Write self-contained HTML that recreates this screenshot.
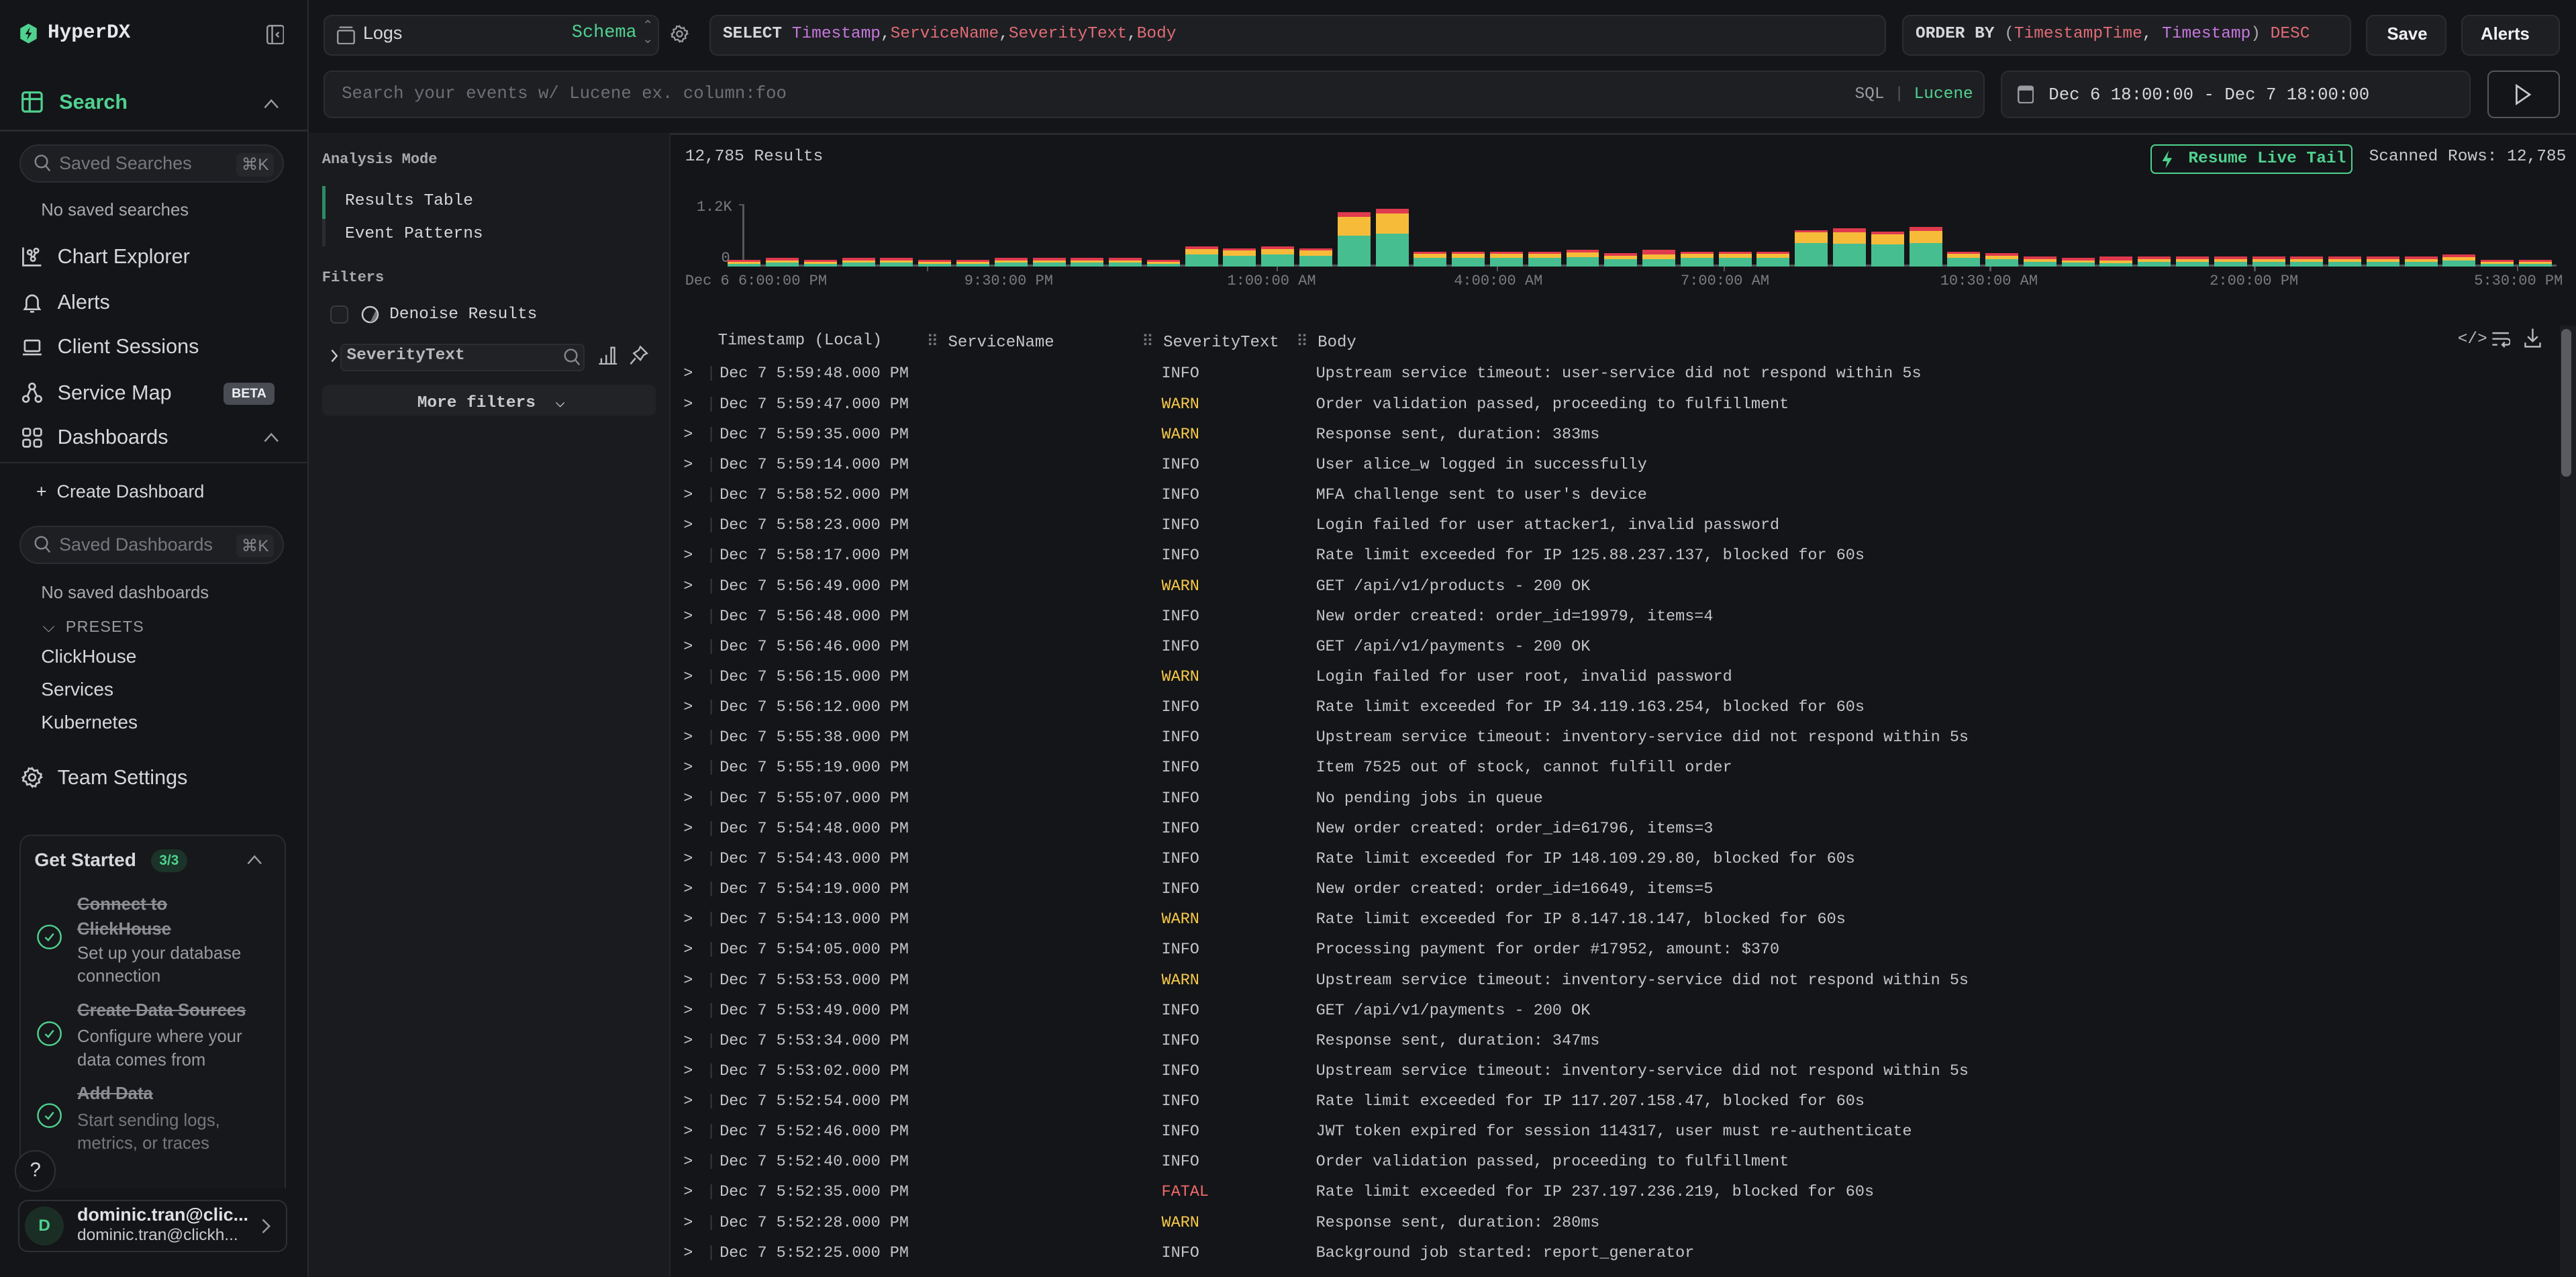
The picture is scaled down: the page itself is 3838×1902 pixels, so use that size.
<!DOCTYPE html>
<html><head><meta charset="utf-8"><style>
*{box-sizing:border-box;margin:0;padding:0}
html,body{width:3838px;height:1902px;overflow:hidden;background:#141518}
#r{width:1568px;height:777px;zoom:2.44770;position:relative;background:#141518;color:#c9cacd;font-family:"Liberation Sans",sans-serif;font-size:12.5px;overflow:hidden}
.a{position:absolute;white-space:nowrap}
.m{font-family:"Liberation Mono",monospace}
#sb{position:absolute;left:0;top:0;width:188px;height:777px;background:#141518;border-right:1px solid #2a2b2f}
.nav{position:absolute;left:13px;display:flex;align-items:center;gap:9px;color:#d6d7da}
.box{position:absolute;border:1px solid #2c2d32;background:#1e1f23;border-radius:5px}
.hl{position:absolute;left:0;width:187px;height:1px;background:#2a2b2f}
#fp{position:absolute;left:188px;top:81px;width:220px;height:696px;background:#1a1b1e;border-right:1px solid #25262a}
.row{position:absolute;left:408px;width:1150px;height:18px;font-family:"Liberation Mono",monospace;font-size:9.6px;color:#c4c5c8}
.row span{position:absolute;top:3px}
.bars{position:absolute;left:443px;top:100px;height:62px;width:1120px;display:flex;align-items:flex-end;gap:3.2px}
.b{width:20px;display:flex;flex-direction:column}
.b i{display:block;background:#e03a4e;height:1.5px}
.b u{display:block;background:#f7bb3a;height:28%}
.b s{display:block;background:#47be8f;flex:1}
</style></head><body><div id="r">

<div id="sb">
 <svg class="a" style="left:12px;top:14px" width="11" height="13" viewBox="0 0 11 13"><path d="M5.5 0.5 L10.5 3.3 V9.7 L5.5 12.5 L0.5 9.7 V3.3Z" fill="#4fd18f"/><path d="M6.5 2.5 L3.5 7 H5.5 L4.5 10.5 L7.5 6 H5.5Z" fill="#141518"/></svg>
 <div class="a m" style="left:29px;top:13px;font-size:12px;font-weight:bold;color:#e6e7ea">HyperDX</div>
 <svg class="a" style="left:162px;top:15px" width="11" height="12" viewBox="0 0 11 12"><rect x="0.5" y="0.5" width="10" height="11" rx="1.5" fill="none" stroke="#9a9ba0"/><line x1="3.5" y1="0.5" x2="3.5" y2="11.5" stroke="#9a9ba0"/><path d="M7.5 4.5 L6 6 L7.5 7.5" stroke="#9a9ba0" fill="none"/></svg>

 <div class="nav" style="top:55px;color:#4fd18f;font-weight:bold;font-size:12.5px"><svg width="13" height="13" viewBox="0 0 13 13"><rect x="0.7" y="0.7" width="11.6" height="11.6" rx="1.5" fill="none" stroke="#4fd18f" stroke-width="1.3"/><line x1="0.7" y1="4.7" x2="12.3" y2="4.7" stroke="#4fd18f" stroke-width="1.3"/><line x1="5" y1="0.7" x2="5" y2="12.3" stroke="#4fd18f" stroke-width="1.3"/></svg><span style="margin-left:1px">Search</span></div>
 <svg class="a" style="left:160px;top:60px" width="10" height="6"><path d="M1 5.5 L5 1 L9 5.5" fill="none" stroke="#9a9ba0"/></svg>
 <div class="hl" style="top:79px"></div>
 <div class="box" style="left:12px;top:88px;width:161px;height:23px;border-radius:12px"></div>
 <svg class="a" style="left:21px;top:94px" width="10" height="11"><circle cx="4.3" cy="4.3" r="3.6" fill="none" stroke="#85868b"/><line x1="7" y1="7" x2="9.5" y2="10" stroke="#85868b"/></svg>
 <div class="a" style="left:36px;top:93px;color:#77787d;font-size:11px">Saved Searches</div>
 <div class="a" style="left:144px;top:93px;color:#88898e;font-size:10px;background:#26272b;padding:1px 3px;border-radius:3px">⌘K</div>
 <div class="a" style="left:25px;top:122px;color:#a9aaae;font-size:10.5px">No saved searches</div>

 <div class="nav" style="top:149px"><svg width="13" height="13" viewBox="0 0 13 13" fill="none" stroke="#c9cacd" stroke-width="1.1"><path d="M1 1V12H12"/><circle cx="5" cy="4" r="1.3"/><circle cx="9" cy="3" r="1.3"/><circle cx="7" cy="8" r="1.3"/><path d="M5.5 5L6.6 7M8.6 4.2L7.4 6.8"/></svg>Chart Explorer</div>
 <div class="nav" style="top:177px"><svg width="13" height="13" viewBox="0 0 13 13" fill="none" stroke="#c9cacd" stroke-width="1.1"><path d="M3 9V5.5a3.5 3.5 0 0 1 7 0V9l1 1.5H2Z"/><path d="M5.3 12h2.4"/></svg>Alerts</div>
 <div class="nav" style="top:204px"><svg width="13" height="13" viewBox="0 0 13 13" fill="none" stroke="#c9cacd" stroke-width="1.1"><rect x="2" y="2.5" width="9" height="6.5" rx="0.8"/><path d="M0.8 11H12.2"/></svg>Client Sessions</div>
 <div class="nav" style="top:232px"><svg width="13" height="13" viewBox="0 0 13 13" fill="none" stroke="#c9cacd" stroke-width="1.1"><circle cx="6.5" cy="2.7" r="1.8"/><circle cx="2.7" cy="10.3" r="1.8"/><circle cx="10.3" cy="10.3" r="1.8"/><path d="M5.5 4.3L3.5 8.7M7.5 4.3L9.5 8.7"/></svg>Service Map</div>
 <div class="a" style="left:136px;top:233px;background:#4a4c54;color:#f0f0f2;font-size:8px;font-weight:bold;padding:2px 5px;border-radius:3px">BETA</div>
 <div class="nav" style="top:259px"><svg width="13" height="13" viewBox="0 0 13 13" fill="none" stroke="#c9cacd" stroke-width="1.1"><rect x="1" y="1" width="4.3" height="4.3" rx="1.2"/><rect x="7.7" y="1" width="4.3" height="4.3" rx="1.2"/><rect x="1" y="7.7" width="4.3" height="4.3" rx="1.2"/><rect x="7.7" y="7.7" width="4.3" height="4.3" rx="1.2"/></svg>Dashboards</div>
 <svg class="a" style="left:160px;top:263px" width="10" height="6"><path d="M1 5.5 L5 1 L9 5.5" fill="none" stroke="#9a9ba0"/></svg>
 <div class="hl" style="top:281px"></div>
 <div class="a" style="left:22px;top:293px;font-size:11px;color:#d6d7da">+&nbsp; Create Dashboard</div>
 <div class="box" style="left:12px;top:320px;width:161px;height:23px;border-radius:12px"></div>
 <svg class="a" style="left:21px;top:326px" width="10" height="11"><circle cx="4.3" cy="4.3" r="3.6" fill="none" stroke="#85868b"/><line x1="7" y1="7" x2="9.5" y2="10" stroke="#85868b"/></svg>
 <div class="a" style="left:36px;top:325px;color:#77787d;font-size:11px">Saved Dashboards</div>
 <div class="a" style="left:144px;top:325px;color:#88898e;font-size:10px;background:#26272b;padding:1px 3px;border-radius:3px">⌘K</div>
 <div class="a" style="left:25px;top:355px;color:#a9aaae;font-size:10.5px">No saved dashboards</div>
 <div class="a" style="left:26px;top:376px;color:#9a9ba0;font-size:9.5px;letter-spacing:0.5px">⌵&nbsp; PRESETS</div>
 <div class="a" style="left:25px;top:393px;font-size:11.5px;color:#d6d7da">ClickHouse</div>
 <div class="a" style="left:25px;top:413px;font-size:11.5px;color:#d6d7da">Services</div>
 <div class="a" style="left:25px;top:433px;font-size:11.5px;color:#d6d7da">Kubernetes</div>
 <div class="nav" style="top:466px"><svg width="13" height="13" viewBox="0 0 13 13" fill="none" stroke="#c9cacd" stroke-width="1.1"><circle cx="6.5" cy="6.5" r="2"/><path d="M6.5 1l1.2 1.5 1.9-.4.6 1.8 1.8.6-.4 1.9L12 6.5l-1.5 1.2.4 1.9-1.8.6-.6 1.8-1.9-.4L6.5 12l-1.2-1.5-1.9.4-.6-1.8-1.8-.6.4-1.9L1 6.5l1.5-1.2-.4-1.9 1.8-.6.6-1.8 1.9.4Z"/></svg>Team Settings</div>

 <div class="a" style="left:12px;top:508px;width:162px;height:215px;border:1px solid #2a2b2f;border-bottom:none;border-radius:7px 7px 0 0;background:#17181b"></div>
 <div class="a" style="left:21px;top:517px;font-weight:bold;font-size:11.5px;color:#d6d7da">Get Started</div>
 <div class="a" style="left:92px;top:517px;background:#1b3328;color:#4fd18f;font-size:8.5px;font-weight:bold;padding:2px 5px;border-radius:7px">3/3</div>
 <svg class="a" style="left:150px;top:520px" width="10" height="6"><path d="M1 5.5 L5 1 L9 5.5" fill="none" stroke="#9a9ba0"/></svg>
 <svg class="a" style="left:22px;top:562px" width="16" height="16"><circle cx="8" cy="8" r="7" fill="none" stroke="#4fd18f" stroke-width="1"/><path d="M5.5 8.2L7.3 10 10.5 6" fill="none" stroke="#4fd18f"/></svg>
 <div class="a" style="left:47px;top:543px;font-size:10.5px;line-height:15px;color:#8d8e93;font-weight:bold;text-decoration:line-through">Connect to<br>ClickHouse</div>
 <div class="a" style="left:47px;top:573px;font-size:10.5px;line-height:14px;color:#9a9ba0">Set up your database<br>connection</div>
 <svg class="a" style="left:22px;top:621px" width="16" height="16"><circle cx="8" cy="8" r="7" fill="none" stroke="#4fd18f" stroke-width="1"/><path d="M5.5 8.2L7.3 10 10.5 6" fill="none" stroke="#4fd18f"/></svg>
 <div class="a" style="left:47px;top:609px;font-size:10.5px;color:#8d8e93;font-weight:bold;text-decoration:line-through">Create Data Sources</div>
 <div class="a" style="left:47px;top:624px;font-size:10.5px;line-height:14px;color:#9a9ba0">Configure where your<br>data comes from</div>
 <svg class="a" style="left:22px;top:671px" width="16" height="16"><circle cx="8" cy="8" r="7" fill="none" stroke="#4fd18f" stroke-width="1"/><path d="M5.5 8.2L7.3 10 10.5 6" fill="none" stroke="#4fd18f"/></svg>
 <div class="a" style="left:47px;top:660px;font-size:10.5px;color:#8d8e93;font-weight:bold;text-decoration:line-through">Add Data</div>
 <div class="a" style="left:47px;top:675px;font-size:10.5px;line-height:14px;color:#76777c">Start sending logs,<br>metrics, or traces</div>
 <div class="a" style="left:9px;top:700px;width:25px;height:25px;border-radius:50%;border:1px solid #2f3035;background:#141518;color:#d6d7da;text-align:center;line-height:23px;font-size:12px">?</div>
 <div class="a" style="left:11px;top:730px;width:164px;height:32px;border:1px solid #2f3035;border-radius:6px;background:#141518"></div>
 <div class="a" style="left:15px;top:734px;width:24px;height:24px;border-radius:50%;background:#1b2e25;color:#4fd18f;font-weight:bold;font-size:10px;text-align:center;line-height:24px">D</div>
 <div class="a" style="left:47px;top:733px;font-size:11px;font-weight:bold;color:#e0e1e4">dominic.tran@clic...</div>
 <div class="a" style="left:47px;top:746px;font-size:10px;color:#c9cacd">dominic.tran@clickh...</div>
 <svg class="a" style="left:159px;top:741px" width="6" height="10"><path d="M1 1L5 5 1 9" fill="none" stroke="#9a9ba0"/></svg>
</div>

<!-- top bar -->
<div class="box" style="left:197px;top:9px;width:204px;height:25px"></div>
<svg class="a" style="left:205px;top:15px" width="11" height="12"><rect x="0.5" y="3.5" width="10" height="8" rx="1" fill="none" stroke="#9a9ba0"/><path d="M1.5 1.5H9.5" stroke="#9a9ba0"/></svg>
<div class="a" style="left:221px;top:14px;font-size:11px;color:#d6d7da">Logs</div>
<div class="a m" style="left:348px;top:14px;font-size:11px;color:#4fd18f">Schema</div>
<div class="a" style="left:391px;top:12px;font-size:8px;color:#77787d;line-height:8px">⌃<br>⌄</div>
<svg class="a" style="left:408px;top:15px" width="11" height="11" viewBox="0 0 13 13" fill="none" stroke="#9a9ba0" stroke-width="1.1"><circle cx="6.5" cy="6.5" r="2"/><path d="M6.5 1l1.2 1.5 1.9-.4.6 1.8 1.8.6-.4 1.9L12 6.5l-1.5 1.2.4 1.9-1.8.6-.6 1.8-1.9-.4L6.5 12l-1.2-1.5-1.9.4-.6-1.8-1.8-.6.4-1.9L1 6.5l1.5-1.2-.4-1.9 1.8-.6.6-1.8 1.9.4Z"/></svg>
<div class="box" style="left:432px;top:9px;width:716px;height:25px"></div>
<div class="a m" style="left:440px;top:15px;font-size:10px"><b style="color:#d6d7da">SELECT</b> <span style="color:#c678dd">Timestamp</span><span style="color:#ccc">,</span><span style="color:#e06c75">ServiceName</span>,<span style="color:#e06c75">SeverityText</span>,<span style="color:#e06c75">Body</span></div>
<div class="box" style="left:1158px;top:9px;width:273px;height:25px"></div>
<div class="a m" style="left:1166px;top:15px;font-size:10px"><b style="color:#d6d7da">ORDER BY</b> <span style="color:#aaa">(</span><span style="color:#e06c75">TimestampTime</span>, <span style="color:#c678dd">Timestamp</span><span style="color:#aaa">)</span> <span style="color:#e06c75">DESC</span></div>
<div class="box" style="left:1440px;top:9px;width:49px;height:25px"></div>
<div class="a" style="left:1453px;top:15px;font-size:10.5px;font-weight:bold;color:#f0f0f2">Save</div>
<div class="box" style="left:1498px;top:9px;width:60px;height:25px"></div>
<div class="a" style="left:1510px;top:15px;font-size:10.5px;font-weight:bold;color:#f0f0f2">Alerts</div>

<div class="box" style="left:197px;top:43px;width:1011px;height:29px"></div>
<div class="a m" style="left:208px;top:51px;font-size:10.5px;color:#6e6f74">Search your events w/ Lucene ex. column:foo</div>
<div class="a m" style="left:1129px;top:52px;font-size:10px;color:#9a9ba0">SQL <span style="color:#55565b">|</span> <span style="color:#4fd18f">Lucene</span></div>
<div class="box" style="left:1218px;top:43px;width:286px;height:29px"></div>
<svg class="a" style="left:1228px;top:51px" width="10" height="12"><rect x="0.5" y="1.5" width="9" height="10" rx="1.5" fill="none" stroke="#9a9ba0"/><rect x="0.5" y="1.5" width="9" height="2.5" fill="#9a9ba0"/></svg>
<div class="a m" style="left:1247px;top:52px;font-size:10.5px;color:#d6d7da">Dec 6 18:00:00 - Dec 7 18:00:00</div>
<div class="a" style="left:1514px;top:43px;width:44px;height:29px;border:1px solid #55565b;border-radius:4px"></div>
<svg class="a" style="left:1531px;top:51px" width="10" height="13"><path d="M1 1L9 6.5 1 12Z" fill="none" stroke="#c9cacd" stroke-width="1.1"/></svg>
<div class="a" style="left:188px;top:81px;width:1380px;height:1px;background:#2a2b2f"></div>

<!-- filter panel -->
<div id="fp"></div>
<div class="a m" style="left:196px;top:92px;font-size:9px;font-weight:bold;color:#a9aaae">Analysis Mode</div>
<div class="a" style="left:196px;top:113px;width:2px;height:20px;background:#2e8a63"></div>
<div class="a" style="left:196px;top:133px;width:2px;height:17px;background:#2c2d31"></div>
<div class="a m" style="left:210px;top:117px;font-size:10px;color:#d6d7da">Results Table</div>
<div class="a m" style="left:210px;top:137px;font-size:10px;color:#d6d7da">Event Patterns</div>
<div class="a m" style="left:196px;top:164px;font-size:9px;font-weight:bold;color:#a9aaae">Filters</div>
<div class="a" style="left:201px;top:186px;width:11px;height:11px;border:1px solid #3a3b40;border-radius:3px;background:#1e1f23"></div>
<svg class="a" style="left:220px;top:186px" width="11" height="11"><circle cx="5.5" cy="5.5" r="4.7" fill="none" stroke="#c9cacd"/><path d="M5.5 10.2A4.7 4.7 0 0 0 9 3" fill="#777"/></svg>
<div class="a m" style="left:237px;top:186px;font-size:10px;color:#d6d7da">Denoise Results</div>
<svg class="a" style="left:201px;top:212px" width="5" height="9"><path d="M1 1L4 4.5 1 8" fill="none" stroke="#c9cacd"/></svg>
<div class="a" style="left:207px;top:209px;width:149px;height:17px;border:1px solid #2c2d32;background:#212226;border-radius:3px"></div>
<div class="a m" style="left:211px;top:211px;font-size:10px;font-weight:bold;color:#b8b9bd">SeverityText</div>
<svg class="a" style="left:343px;top:212px" width="10" height="11"><circle cx="4.3" cy="4.3" r="3.6" fill="none" stroke="#85868b"/><line x1="7" y1="7" x2="9.5" y2="10" stroke="#85868b"/></svg>
<svg class="a" style="left:364px;top:210px" width="12" height="12" fill="none" stroke="#b8b9bd"><path d="M0.5 11.5H11.5M2 11V8M5 11V6M8 11V1.5h2V11"/></svg>
<svg class="a" style="left:383px;top:210px" width="12" height="12" fill="none" stroke="#b8b9bd"><path d="M7 1l4 4-2 1-2 3-4-4 3-2zM4 8l-3 3.5"/></svg>
<div class="a" style="left:196px;top:234px;width:203px;height:19px;background:#222327;border-radius:4px"></div>
<div class="a m" style="left:254px;top:238px;font-size:10px;font-weight:bold;color:#c9cacd">More filters&nbsp; <span style="font-weight:normal">⌵</span></div>

<!-- results -->
<div class="a m" style="left:417px;top:90px;font-size:10px;color:#c9cacd">12,785 Results</div>
<div class="a" style="left:1309px;top:88px;width:123px;height:18px;border:1px solid #4fd18f;border-radius:3px"></div>
<svg class="a" style="left:1315px;top:91px" width="8" height="12"><path d="M5 0.5L1 7H4L3 11.5 7 5H4Z" fill="#4fd18f"/></svg>
<div class="a m" style="left:1332px;top:91px;font-size:10px;font-weight:bold;color:#4fd18f">Resume Live Tail</div>
<div class="a m" style="left:1442px;top:90px;font-size:10px;color:#c9cacd">Scanned Rows: 12,785</div>

<div class="a m" style="left:424px;top:121px;font-size:9px;color:#7a7b80">1.2K</div>
<div class="a m" style="left:439px;top:152px;font-size:9px;color:#7a7b80">0</div>
<div class="a" style="left:452px;top:124px;width:1px;height:38px;background:#55565b"></div>
<div class="a" style="left:450px;top:124px;width:3px;height:1px;background:#55565b"></div>
<div class="a" style="left:443px;top:161px;width:1113px;height:1px;background:#55565b"></div>
<div class="bars">
<div class="b" style="height:4px"><i></i><u></u><s></s></div>
<div class="b" style="height:5px"><i></i><u></u><s></s></div>
<div class="b" style="height:4px"><i></i><u></u><s></s></div>
<div class="b" style="height:5px"><i></i><u></u><s></s></div>
<div class="b" style="height:5px"><i></i><u></u><s></s></div>
<div class="b" style="height:4px"><i></i><u></u><s></s></div>
<div class="b" style="height:4px"><i></i><u></u><s></s></div>
<div class="b" style="height:5px"><i></i><u></u><s></s></div>
<div class="b" style="height:5px"><i></i><u></u><s></s></div>
<div class="b" style="height:5px"><i></i><u></u><s></s></div>
<div class="b" style="height:5px"><i></i><u></u><s></s></div>
<div class="b" style="height:4px"><i></i><u></u><s></s></div>
<div class="b" style="height:12px"><i></i><u></u><s></s></div>
<div class="b" style="height:11px"><i></i><u></u><s></s></div>
<div class="b" style="height:12px"><i></i><u></u><s></s></div>
<div class="b" style="height:11px"><i></i><u></u><s></s></div>
<div class="b" style="height:33px"><i style="height:3px"></i><u style="height:35%"></u><s></s></div>
<div class="b" style="height:35px"><i style="height:3px"></i><u style="height:35%"></u><s></s></div>
<div class="b" style="height:9px"><i></i><u></u><s></s></div>
<div class="b" style="height:9px"><i></i><u></u><s></s></div>
<div class="b" style="height:9px"><i></i><u></u><s></s></div>
<div class="b" style="height:9px"><i></i><u></u><s></s></div>
<div class="b" style="height:10px"><i></i><u></u><s></s></div>
<div class="b" style="height:8px"><i></i><u></u><s></s></div>
<div class="b" style="height:10px"><i style="height:3px"></i><u></u><s></s></div>
<div class="b" style="height:9px"><i></i><u></u><s></s></div>
<div class="b" style="height:9px"><i></i><u></u><s></s></div>
<div class="b" style="height:9px"><i></i><u></u><s></s></div>
<div class="b" style="height:22px"><i></i><u style="height:30%"></u><s></s></div>
<div class="b" style="height:23px"><i style="height:2.5px"></i><u style="height:30%"></u><s></s></div>
<div class="b" style="height:21px"><i></i><u style="height:30%"></u><s></s></div>
<div class="b" style="height:24px"><i style="height:2.5px"></i><u style="height:30%"></u><s></s></div>
<div class="b" style="height:9px"><i></i><u></u><s></s></div>
<div class="b" style="height:8px"><i></i><u></u><s></s></div>
<div class="b" style="height:6px"><i></i><u></u><s></s></div>
<div class="b" style="height:5px"><i></i><u></u><s></s></div>
<div class="b" style="height:6px"><i style="height:2.5px"></i><u></u><s></s></div>
<div class="b" style="height:6px"><i></i><u></u><s></s></div>
<div class="b" style="height:6px"><i></i><u></u><s></s></div>
<div class="b" style="height:6px"><i></i><u></u><s></s></div>
<div class="b" style="height:6px"><i></i><u></u><s></s></div>
<div class="b" style="height:6px"><i></i><u></u><s></s></div>
<div class="b" style="height:6px"><i></i><u></u><s></s></div>
<div class="b" style="height:6px"><i></i><u></u><s></s></div>
<div class="b" style="height:6px"><i></i><u></u><s></s></div>
<div class="b" style="height:7px"><i></i><u></u><s></s></div>
<div class="b" style="height:4px"><i></i><u></u><s></s></div>
<div class="b" style="height:4px"><i></i><u></u><s></s></div>
</div>
<div class="a" style="left:564px;top:162px;width:1px;height:3px;background:#55565b"></div>
<div class="a" style="left:777px;top:162px;width:1px;height:3px;background:#55565b"></div>
<div class="a" style="left:911px;top:162px;width:1px;height:3px;background:#55565b"></div>
<div class="a" style="left:1049px;top:162px;width:1px;height:3px;background:#55565b"></div>
<div class="a" style="left:1211px;top:162px;width:1px;height:3px;background:#55565b"></div>
<div class="a" style="left:1372px;top:162px;width:1px;height:3px;background:#55565b"></div>
<div class="a" style="left:1532px;top:162px;width:1px;height:3px;background:#55565b"></div>
<div class="a m" style="left:417px;top:166px;font-size:9px;color:#7a7b80">Dec 6 6:00:00 PM</div>
<div class="a m" style="left:587px;top:166px;font-size:9px;color:#7a7b80">9:30:00 PM</div>
<div class="a m" style="left:747px;top:166px;font-size:9px;color:#7a7b80">1:00:00 AM</div>
<div class="a m" style="left:885px;top:166px;font-size:9px;color:#7a7b80">4:00:00 AM</div>
<div class="a m" style="left:1023px;top:166px;font-size:9px;color:#7a7b80">7:00:00 AM</div>
<div class="a m" style="left:1181px;top:166px;font-size:9px;color:#7a7b80">10:30:00 AM</div>
<div class="a m" style="left:1345px;top:166px;font-size:9px;color:#7a7b80">2:00:00 PM</div>
<div class="a m" style="left:1506px;top:166px;font-size:9px;color:#7a7b80">5:30:00 PM</div>

<div class="a m" style="left:437px;top:202px;font-size:9.8px;color:#c4c5c8">Timestamp (Local)</div>
<div class="a m" style="left:564px;top:202px;font-size:9.8px;color:#c4c5c8"><span style="color:#77787d">⠿</span> ServiceName</div>
<div class="a m" style="left:695px;top:202px;font-size:9.8px;color:#c4c5c8"><span style="color:#77787d">⠿</span> SeverityText</div>
<div class="a m" style="left:789px;top:202px;font-size:9.8px;color:#c4c5c8"><span style="color:#77787d">⠿</span> Body</div>
<div class="a m" style="left:1496px;top:201px;font-size:10px;color:#b8b9bd">&lt;/&gt;</div>
<svg class="a" style="left:1516px;top:200px" width="12" height="12" fill="none" stroke="#b8b9bd"><path d="M1 2.5H11M1 6H10a1.8 1.8 0 0 1 0 3.6H7M8.5 8L7 9.6 8.5 11M1 9.6H4"/></svg>
<svg class="a" style="left:1536px;top:199px" width="11" height="13" fill="none" stroke="#b8b9bd"><path d="M5.5 1V8.5M2.5 5.8L5.5 8.7 8.5 5.8M1 9.5V12H10V9.5"/></svg>
<div class="a" style="left:1558px;top:198px;width:10px;height:579px;background:#1c1d20"></div>
<div class="a" style="left:1559px;top:200px;width:6px;height:90px;background:#5a5b60;border-radius:3px"></div>

<div id="rows"></div>
<div class="row" style="top:219px"><span style="left:8px">&gt;</span><span style="left:22px;color:#3a3b40">|</span><span style="left:30px">Dec 7 5:59:48.000 PM</span><span style="left:299px">INFO</span><span style="left:393px">Upstream service timeout: user-service did not respond within 5s</span></div>
<div class="row" style="top:237.5px"><span style="left:8px">&gt;</span><span style="left:22px;color:#3a3b40">|</span><span style="left:30px">Dec 7 5:59:47.000 PM</span><span style="left:299px;color:#f7c948">WARN</span><span style="left:393px">Order validation passed, proceeding to fulfillment</span></div>
<div class="row" style="top:256px"><span style="left:8px">&gt;</span><span style="left:22px;color:#3a3b40">|</span><span style="left:30px">Dec 7 5:59:35.000 PM</span><span style="left:299px;color:#f7c948">WARN</span><span style="left:393px">Response sent, duration: 383ms</span></div>
<div class="row" style="top:274.4px"><span style="left:8px">&gt;</span><span style="left:22px;color:#3a3b40">|</span><span style="left:30px">Dec 7 5:59:14.000 PM</span><span style="left:299px">INFO</span><span style="left:393px">User alice_w logged in successfully</span></div>
<div class="row" style="top:292.8px"><span style="left:8px">&gt;</span><span style="left:22px;color:#3a3b40">|</span><span style="left:30px">Dec 7 5:58:52.000 PM</span><span style="left:299px">INFO</span><span style="left:393px">MFA challenge sent to user's device</span></div>
<div class="row" style="top:311.3px"><span style="left:8px">&gt;</span><span style="left:22px;color:#3a3b40">|</span><span style="left:30px">Dec 7 5:58:23.000 PM</span><span style="left:299px">INFO</span><span style="left:393px">Login failed for user attacker1, invalid password</span></div>
<div class="row" style="top:329.7px"><span style="left:8px">&gt;</span><span style="left:22px;color:#3a3b40">|</span><span style="left:30px">Dec 7 5:58:17.000 PM</span><span style="left:299px">INFO</span><span style="left:393px">Rate limit exceeded for IP 125.88.237.137, blocked for 60s</span></div>
<div class="row" style="top:348.2px"><span style="left:8px">&gt;</span><span style="left:22px;color:#3a3b40">|</span><span style="left:30px">Dec 7 5:56:49.000 PM</span><span style="left:299px;color:#f7c948">WARN</span><span style="left:393px">GET /api/v1/products - 200 OK</span></div>
<div class="row" style="top:366.6px"><span style="left:8px">&gt;</span><span style="left:22px;color:#3a3b40">|</span><span style="left:30px">Dec 7 5:56:48.000 PM</span><span style="left:299px">INFO</span><span style="left:393px">New order created: order_id=19979, items=4</span></div>
<div class="row" style="top:385px"><span style="left:8px">&gt;</span><span style="left:22px;color:#3a3b40">|</span><span style="left:30px">Dec 7 5:56:46.000 PM</span><span style="left:299px">INFO</span><span style="left:393px">GET /api/v1/payments - 200 OK</span></div>
<div class="row" style="top:403.5px"><span style="left:8px">&gt;</span><span style="left:22px;color:#3a3b40">|</span><span style="left:30px">Dec 7 5:56:15.000 PM</span><span style="left:299px;color:#f7c948">WARN</span><span style="left:393px">Login failed for user root, invalid password</span></div>
<div class="row" style="top:422px"><span style="left:8px">&gt;</span><span style="left:22px;color:#3a3b40">|</span><span style="left:30px">Dec 7 5:56:12.000 PM</span><span style="left:299px">INFO</span><span style="left:393px">Rate limit exceeded for IP 34.119.163.254, blocked for 60s</span></div>
<div class="row" style="top:440.4px"><span style="left:8px">&gt;</span><span style="left:22px;color:#3a3b40">|</span><span style="left:30px">Dec 7 5:55:38.000 PM</span><span style="left:299px">INFO</span><span style="left:393px">Upstream service timeout: inventory-service did not respond within 5s</span></div>
<div class="row" style="top:458.8px"><span style="left:8px">&gt;</span><span style="left:22px;color:#3a3b40">|</span><span style="left:30px">Dec 7 5:55:19.000 PM</span><span style="left:299px">INFO</span><span style="left:393px">Item 7525 out of stock, cannot fulfill order</span></div>
<div class="row" style="top:477.3px"><span style="left:8px">&gt;</span><span style="left:22px;color:#3a3b40">|</span><span style="left:30px">Dec 7 5:55:07.000 PM</span><span style="left:299px">INFO</span><span style="left:393px">No pending jobs in queue</span></div>
<div class="row" style="top:495.7px"><span style="left:8px">&gt;</span><span style="left:22px;color:#3a3b40">|</span><span style="left:30px">Dec 7 5:54:48.000 PM</span><span style="left:299px">INFO</span><span style="left:393px">New order created: order_id=61796, items=3</span></div>
<div class="row" style="top:514.2px"><span style="left:8px">&gt;</span><span style="left:22px;color:#3a3b40">|</span><span style="left:30px">Dec 7 5:54:43.000 PM</span><span style="left:299px">INFO</span><span style="left:393px">Rate limit exceeded for IP 148.109.29.80, blocked for 60s</span></div>
<div class="row" style="top:532.6px"><span style="left:8px">&gt;</span><span style="left:22px;color:#3a3b40">|</span><span style="left:30px">Dec 7 5:54:19.000 PM</span><span style="left:299px">INFO</span><span style="left:393px">New order created: order_id=16649, items=5</span></div>
<div class="row" style="top:551px"><span style="left:8px">&gt;</span><span style="left:22px;color:#3a3b40">|</span><span style="left:30px">Dec 7 5:54:13.000 PM</span><span style="left:299px;color:#f7c948">WARN</span><span style="left:393px">Rate limit exceeded for IP 8.147.18.147, blocked for 60s</span></div>
<div class="row" style="top:569.5px"><span style="left:8px">&gt;</span><span style="left:22px;color:#3a3b40">|</span><span style="left:30px">Dec 7 5:54:05.000 PM</span><span style="left:299px">INFO</span><span style="left:393px">Processing payment for order #17952, amount: $370</span></div>
<div class="row" style="top:588px"><span style="left:8px">&gt;</span><span style="left:22px;color:#3a3b40">|</span><span style="left:30px">Dec 7 5:53:53.000 PM</span><span style="left:299px;color:#f7c948">WARN</span><span style="left:393px">Upstream service timeout: inventory-service did not respond within 5s</span></div>
<div class="row" style="top:606.4px"><span style="left:8px">&gt;</span><span style="left:22px;color:#3a3b40">|</span><span style="left:30px">Dec 7 5:53:49.000 PM</span><span style="left:299px">INFO</span><span style="left:393px">GET /api/v1/payments - 200 OK</span></div>
<div class="row" style="top:624.8px"><span style="left:8px">&gt;</span><span style="left:22px;color:#3a3b40">|</span><span style="left:30px">Dec 7 5:53:34.000 PM</span><span style="left:299px">INFO</span><span style="left:393px">Response sent, duration: 347ms</span></div>
<div class="row" style="top:643.3px"><span style="left:8px">&gt;</span><span style="left:22px;color:#3a3b40">|</span><span style="left:30px">Dec 7 5:53:02.000 PM</span><span style="left:299px">INFO</span><span style="left:393px">Upstream service timeout: inventory-service did not respond within 5s</span></div>
<div class="row" style="top:661.7px"><span style="left:8px">&gt;</span><span style="left:22px;color:#3a3b40">|</span><span style="left:30px">Dec 7 5:52:54.000 PM</span><span style="left:299px">INFO</span><span style="left:393px">Rate limit exceeded for IP 117.207.158.47, blocked for 60s</span></div>
<div class="row" style="top:680.2px"><span style="left:8px">&gt;</span><span style="left:22px;color:#3a3b40">|</span><span style="left:30px">Dec 7 5:52:46.000 PM</span><span style="left:299px">INFO</span><span style="left:393px">JWT token expired for session 114317, user must re-authenticate</span></div>
<div class="row" style="top:698.6px"><span style="left:8px">&gt;</span><span style="left:22px;color:#3a3b40">|</span><span style="left:30px">Dec 7 5:52:40.000 PM</span><span style="left:299px">INFO</span><span style="left:393px">Order validation passed, proceeding to fulfillment</span></div>
<div class="row" style="top:717px"><span style="left:8px">&gt;</span><span style="left:22px;color:#3a3b40">|</span><span style="left:30px">Dec 7 5:52:35.000 PM</span><span style="left:299px;color:#f06a6a">FATAL</span><span style="left:393px">Rate limit exceeded for IP 237.197.236.219, blocked for 60s</span></div>
<div class="row" style="top:735.5px"><span style="left:8px">&gt;</span><span style="left:22px;color:#3a3b40">|</span><span style="left:30px">Dec 7 5:52:28.000 PM</span><span style="left:299px;color:#f7c948">WARN</span><span style="left:393px">Response sent, duration: 280ms</span></div>
<div class="row" style="top:754px"><span style="left:8px">&gt;</span><span style="left:22px;color:#3a3b40">|</span><span style="left:30px">Dec 7 5:52:25.000 PM</span><span style="left:299px">INFO</span><span style="left:393px">Background job started: report_generator</span></div>

</div></body></html>
